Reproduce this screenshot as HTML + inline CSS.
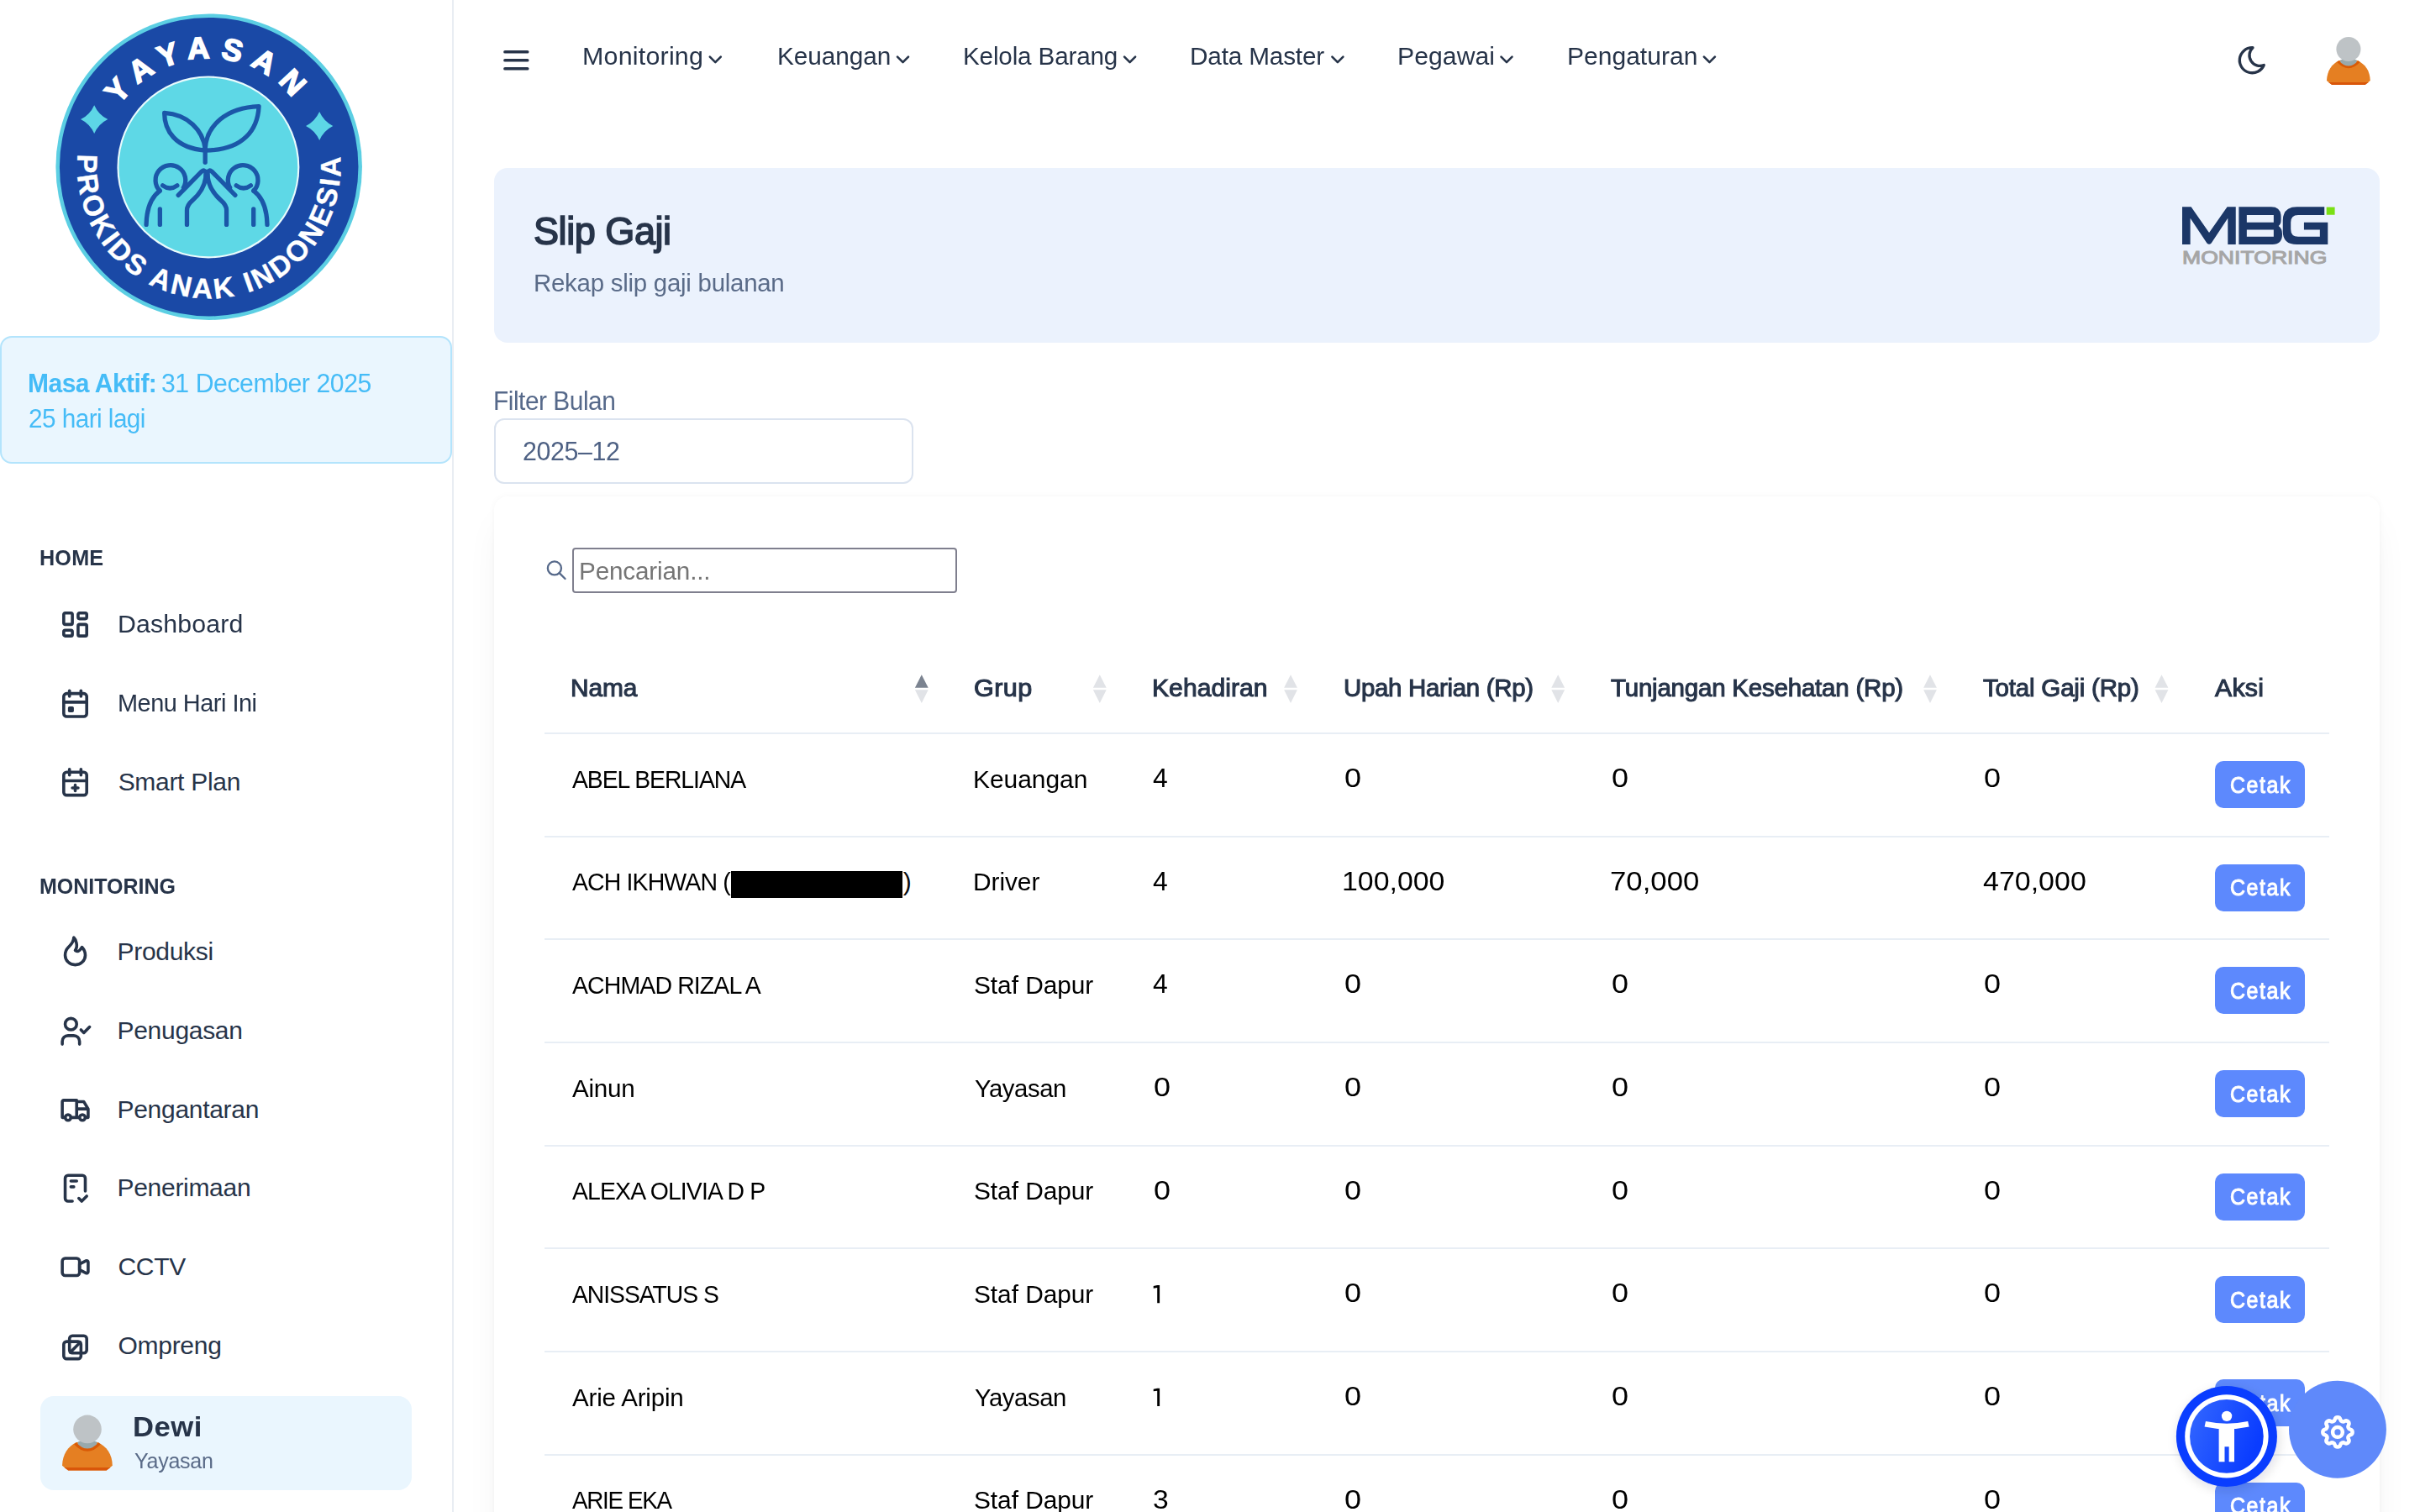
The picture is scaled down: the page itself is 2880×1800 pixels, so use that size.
<!DOCTYPE html>
<html><head><meta charset="utf-8"><title>Slip Gaji</title>
<style>
html,body{margin:0;padding:0;width:2880px;height:1800px;overflow:hidden;}
body{width:2880px;height:1800px;overflow:hidden;position:relative;background:#ffffff;font-family:"Liberation Sans",sans-serif;}
@media (max-width:2000px){html{zoom:0.5;}}
.t{position:absolute;white-space:nowrap;line-height:1;}
.abs{position:absolute;}
svg{position:absolute;overflow:visible;}
</style></head><body><div style="position:absolute;left:0;top:0;width:2880px;height:1800px;overflow:hidden;">
<div class="abs" style="left:538px;top:0;width:2px;height:1800px;background:#e9edf3;"></div>
<div class="abs" style="left:0;top:400px;width:534px;height:148px;border:2px solid #b3e4fc;border-radius:14px;background:#eaf6fe;"></div>
<div class="t" style="left:33.48px;top:441.11px;font-size:31px;font-weight:700;color:#45bcf7;letter-spacing:-0.52px;transform:scaleX(0.9675);transform-origin:0 0;">Masa Aktif:</div>
<div class="t" style="left:192.47px;top:441.11px;font-size:31px;color:#45bcf7;letter-spacing:-0.45px;transform:scaleX(0.9743);transform-origin:0 0;">31 December 2025</div>
<div class="t" style="left:34.01px;top:482.91px;font-size:31px;color:#45bcf7;letter-spacing:-0.56px;transform:scaleX(0.9585);transform-origin:0 0;">25 hari lagi</div>
<div class="t" style="left:47.30px;top:652.38px;font-size:25px;font-weight:700;color:#273449;letter-spacing:0.18px;transform:scaleX(1.0075);transform-origin:0 0;">HOME</div>
<div class="t" style="left:47.31px;top:1042.88px;font-size:25px;font-weight:700;color:#273449;letter-spacing:-0.01px;transform:scaleX(0.9996);transform-origin:0 0;">MONITORING</div>
<div class="t" style="left:139.50px;top:727.85px;font-size:30px;color:#273449;letter-spacing:0.16px;transform:scaleX(1.0093);transform-origin:0 0;">Dashboard</div>
<div class="t" style="left:139.61px;top:822.05px;font-size:30px;color:#273449;letter-spacing:-0.52px;transform:scaleX(0.9639);transform-origin:0 0;">Menu Hari Ini</div>
<div class="t" style="left:140.65px;top:915.65px;font-size:30px;color:#273449;letter-spacing:-0.30px;">Smart Plan</div>
<div class="t" style="left:139.53px;top:1117.65px;font-size:30px;color:#273449;letter-spacing:-0.30px;">Produksi</div>
<div class="t" style="left:139.53px;top:1212.15px;font-size:30px;color:#273449;letter-spacing:-0.30px;">Penugasan</div>
<div class="t" style="left:139.53px;top:1306.25px;font-size:30px;color:#273449;letter-spacing:-0.30px;">Pengantaran</div>
<div class="t" style="left:139.53px;top:1399.05px;font-size:30px;color:#273449;letter-spacing:-0.30px;">Penerimaan</div>
<div class="t" style="left:140.50px;top:1492.65px;font-size:30px;color:#273449;letter-spacing:-0.30px;">CCTV</div>
<div class="t" style="left:140.57px;top:1586.65px;font-size:30px;color:#273449;letter-spacing:-0.30px;">Ompreng</div>
<div class="abs" style="left:48px;top:1662px;width:442px;height:112px;border-radius:16px;background:#eaf6fe;"></div>
<div class="t" style="left:158.16px;top:1681.27px;font-size:34px;font-weight:700;color:#273449;letter-spacing:0.47px;transform:scaleX(1.0190);transform-origin:0 0;">Dewi</div>
<div class="t" style="left:159.94px;top:1727.45px;font-size:25.5px;color:#5a6b88;letter-spacing:-0.29px;transform:scaleX(0.9816);transform-origin:0 0;">Yayasan</div>
<div class="t" style="left:693.39px;top:52.25px;font-size:30px;color:#273449;letter-spacing:0.21px;transform:scaleX(1.0136);transform-origin:0 0;">Monitoring</div>
<div class="t" style="left:925.04px;top:52.25px;font-size:30px;color:#273449;letter-spacing:-0.10px;transform:scaleX(0.9945);transform-origin:0 0;">Keuangan</div>
<div class="t" style="left:1146.15px;top:52.25px;font-size:30px;color:#273449;letter-spacing:-0.17px;transform:scaleX(0.9887);transform-origin:0 0;">Kelola Barang</div>
<div class="t" style="left:1416.15px;top:52.25px;font-size:30px;color:#273449;letter-spacing:-0.16px;transform:scaleX(0.9902);transform-origin:0 0;">Data Master</div>
<div class="t" style="left:1662.91px;top:52.25px;font-size:30px;color:#273449;letter-spacing:0.08px;transform:scaleX(1.0044);transform-origin:0 0;">Pegawai</div>
<div class="t" style="left:1864.92px;top:52.25px;font-size:30px;color:#273449;letter-spacing:0.01px;transform:scaleX(1.0008);transform-origin:0 0;">Pengaturan</div>
<div class="abs" style="left:588px;top:200px;width:2244px;height:208px;border-radius:16px;background:#ebf2fd;"></div>
<div class="t" style="left:635.38px;top:251.93px;font-size:46px;-webkit-text-stroke:1.66px #273449;color:#273449;letter-spacing:-0.45px;transform:scaleX(0.9782);transform-origin:0 0;">Slip Gaji</div>
<div class="t" style="left:634.57px;top:321.65px;font-size:30px;color:#5a6b88;letter-spacing:-0.26px;transform:scaleX(0.9811);transform-origin:0 0;">Rekap slip gaji bulanan</div>
<div class="t" style="left:587.44px;top:461.81px;font-size:31px;color:#56698a;letter-spacing:-0.50px;transform:scaleX(0.9636);transform-origin:0 0;">Filter Bulan</div>
<div class="abs" style="left:588px;top:498px;width:495px;height:73.5px;border:2px solid #dbe3ef;border-radius:12px;background:#fff;"></div>
<div class="t" style="left:621.68px;top:522.00px;font-size:31px;color:#4e6184;letter-spacing:-0.40px;transform:scaleX(0.9795);transform-origin:0 0;">2025–12</div>
<div class="abs" style="left:588px;top:591px;width:2244px;height:1400px;border-radius:16px;background:#fff;box-shadow:0 24px 48px -12px rgba(15,23,42,0.07),0 0 8px rgba(15,23,42,0.035);"></div>
<div class="abs" style="left:681px;top:652px;width:454px;height:49.5px;border:2px solid #7f7f8e;border-radius:4px;background:#fff;"></div>
<div class="t" style="left:688.75px;top:664.65px;font-size:30px;color:#757575;letter-spacing:-0.16px;transform:scaleX(0.9888);transform-origin:0 0;">Pencarian...</div>
<div class="t" style="left:678.53px;top:804.45px;font-size:30px;-webkit-text-stroke:1.08px #273449;color:#273449;letter-spacing:-0.10px;transform:scaleX(0.9960);transform-origin:0 0;">Nama</div>
<div class="t" style="left:1159.07px;top:804.45px;font-size:30px;-webkit-text-stroke:1.08px #273449;color:#273449;letter-spacing:0.42px;transform:scaleX(1.0195);transform-origin:0 0;">Grup</div>
<div class="t" style="left:1371.32px;top:804.45px;font-size:30px;-webkit-text-stroke:1.08px #273449;color:#273449;letter-spacing:0.05px;transform:scaleX(1.0031);transform-origin:0 0;">Kehadiran</div>
<div class="t" style="left:1599.02px;top:804.45px;font-size:30px;-webkit-text-stroke:1.08px #273449;color:#273449;letter-spacing:-0.30px;transform:scaleX(0.9805);transform-origin:0 0;">Upah Harian (Rp)</div>
<div class="t" style="left:1917.34px;top:804.45px;font-size:30px;-webkit-text-stroke:1.08px #273449;color:#273449;letter-spacing:-0.24px;transform:scaleX(0.9846);transform-origin:0 0;">Tunjangan Kesehatan (Rp)</div>
<div class="t" style="left:2359.84px;top:804.45px;font-size:30px;-webkit-text-stroke:1.08px #273449;color:#273449;letter-spacing:-0.21px;transform:scaleX(0.9848);transform-origin:0 0;">Total Gaji (Rp)</div>
<div class="t" style="left:2635.92px;top:804.45px;font-size:30px;-webkit-text-stroke:1.08px #273449;color:#273449;letter-spacing:0.20px;transform:scaleX(1.0109);transform-origin:0 0;">Aksi</div>
<div class="abs" style="left:648px;top:872.00px;width:2124px;height:2px;background:#e8eef5;"></div>
<div class="abs" style="left:648px;top:994.66px;width:2124px;height:2px;background:#e8eef5;"></div>
<div class="abs" style="left:648px;top:1117.32px;width:2124px;height:2px;background:#e8eef5;"></div>
<div class="abs" style="left:648px;top:1239.98px;width:2124px;height:2px;background:#e8eef5;"></div>
<div class="abs" style="left:648px;top:1362.64px;width:2124px;height:2px;background:#e8eef5;"></div>
<div class="abs" style="left:648px;top:1485.30px;width:2124px;height:2px;background:#e8eef5;"></div>
<div class="abs" style="left:648px;top:1607.96px;width:2124px;height:2px;background:#e8eef5;"></div>
<div class="abs" style="left:648px;top:1730.62px;width:2124px;height:2px;background:#e8eef5;"></div>
<div class="t" style="left:680.93px;top:912.65px;font-size:30px;color:#000000;letter-spacing:-1.08px;transform:scaleX(0.9442);transform-origin:0 0;">ABEL BERLIANA</div>
<div class="t" style="left:1158.13px;top:912.65px;font-size:30px;color:#000000;letter-spacing:-0.03px;transform:scaleX(0.9983);transform-origin:0 0;">Keuangan</div>
<div class="t" style="left:1372.08px;top:911.13px;font-size:31.8px;color:#000000;transform:scaleX(1.0026);transform-origin:0 0;">4</div>
<div class="t" style="left:1600.06px;top:911.13px;font-size:31.8px;color:#000000;transform:scaleX(1.1327);transform-origin:0 0;">0</div>
<div class="t" style="left:1918.06px;top:911.13px;font-size:31.8px;color:#000000;transform:scaleX(1.1327);transform-origin:0 0;">0</div>
<div class="t" style="left:2360.56px;top:911.13px;font-size:31.8px;color:#000000;transform:scaleX(1.1327);transform-origin:0 0;">0</div>
<div class="abs" style="left:2636px;top:906.00px;width:107px;height:56px;border-radius:10px;background:#5d89fd;"></div>
<div class="t" style="left:2653.55px;top:920.79px;font-size:27.7px;-webkit-text-stroke:1.00px #ffffff;color:#ffffff;letter-spacing:1.75px;transform:scaleX(0.9000);transform-origin:0 0;">Cetak</div>
<div class="t" style="left:680.93px;top:1035.31px;font-size:30px;color:#000000;letter-spacing:-0.94px;transform:scaleX(0.9502);transform-origin:0 0;">ACH IKHWAN (</div>
<div class="t" style="left:1158.14px;top:1035.31px;font-size:30px;color:#000000;letter-spacing:-0.06px;transform:scaleX(0.9959);transform-origin:0 0;">Driver</div>
<div class="t" style="left:1372.08px;top:1033.79px;font-size:31.8px;color:#000000;transform:scaleX(1.0026);transform-origin:0 0;">4</div>
<div class="t" style="left:1597.46px;top:1033.79px;font-size:31.8px;color:#000000;transform:scaleX(1.0647);transform-origin:0 0;">100,000</div>
<div class="t" style="left:1916.26px;top:1033.79px;font-size:31.8px;color:#000000;transform:scaleX(1.0937);transform-origin:0 0;">70,000</div>
<div class="t" style="left:2359.74px;top:1033.79px;font-size:31.8px;color:#000000;transform:scaleX(1.0684);transform-origin:0 0;">470,000</div>
<div class="abs" style="left:2636px;top:1028.66px;width:107px;height:56px;border-radius:10px;background:#5d89fd;"></div>
<div class="t" style="left:2653.55px;top:1043.45px;font-size:27.7px;-webkit-text-stroke:1.00px #ffffff;color:#ffffff;letter-spacing:1.75px;transform:scaleX(0.9000);transform-origin:0 0;">Cetak</div>
<div class="t" style="left:680.93px;top:1157.97px;font-size:30px;color:#000000;letter-spacing:-0.95px;transform:scaleX(0.9502);transform-origin:0 0;">ACHMAD RIZAL A</div>
<div class="t" style="left:1159.26px;top:1157.97px;font-size:30px;color:#000000;letter-spacing:-0.06px;transform:scaleX(0.9961);transform-origin:0 0;">Staf Dapur</div>
<div class="t" style="left:1372.08px;top:1156.45px;font-size:31.8px;color:#000000;transform:scaleX(1.0026);transform-origin:0 0;">4</div>
<div class="t" style="left:1600.06px;top:1156.45px;font-size:31.8px;color:#000000;transform:scaleX(1.1327);transform-origin:0 0;">0</div>
<div class="t" style="left:1918.06px;top:1156.45px;font-size:31.8px;color:#000000;transform:scaleX(1.1327);transform-origin:0 0;">0</div>
<div class="t" style="left:2360.56px;top:1156.45px;font-size:31.8px;color:#000000;transform:scaleX(1.1327);transform-origin:0 0;">0</div>
<div class="abs" style="left:2636px;top:1151.32px;width:107px;height:56px;border-radius:10px;background:#5d89fd;"></div>
<div class="t" style="left:2653.55px;top:1166.11px;font-size:27.7px;-webkit-text-stroke:1.00px #ffffff;color:#ffffff;letter-spacing:1.75px;transform:scaleX(0.9000);transform-origin:0 0;">Cetak</div>
<div class="t" style="left:680.93px;top:1280.63px;font-size:30px;color:#000000;letter-spacing:-0.24px;transform:scaleX(0.9874);transform-origin:0 0;">Ainun</div>
<div class="t" style="left:1159.94px;top:1280.63px;font-size:30px;color:#000000;letter-spacing:-0.43px;transform:scaleX(0.9771);transform-origin:0 0;">Yayasan</div>
<div class="t" style="left:1372.86px;top:1279.11px;font-size:31.8px;color:#000000;transform:scaleX(1.1327);transform-origin:0 0;">0</div>
<div class="t" style="left:1600.06px;top:1279.11px;font-size:31.8px;color:#000000;transform:scaleX(1.1327);transform-origin:0 0;">0</div>
<div class="t" style="left:1918.06px;top:1279.11px;font-size:31.8px;color:#000000;transform:scaleX(1.1327);transform-origin:0 0;">0</div>
<div class="t" style="left:2360.56px;top:1279.11px;font-size:31.8px;color:#000000;transform:scaleX(1.1327);transform-origin:0 0;">0</div>
<div class="abs" style="left:2636px;top:1273.98px;width:107px;height:56px;border-radius:10px;background:#5d89fd;"></div>
<div class="t" style="left:2653.55px;top:1288.77px;font-size:27.7px;-webkit-text-stroke:1.00px #ffffff;color:#ffffff;letter-spacing:1.75px;transform:scaleX(0.9000);transform-origin:0 0;">Cetak</div>
<div class="t" style="left:680.93px;top:1403.29px;font-size:30px;color:#000000;letter-spacing:-0.91px;transform:scaleX(0.9463);transform-origin:0 0;">ALEXA OLIVIA D P</div>
<div class="t" style="left:1159.26px;top:1403.29px;font-size:30px;color:#000000;letter-spacing:-0.06px;transform:scaleX(0.9961);transform-origin:0 0;">Staf Dapur</div>
<div class="t" style="left:1372.86px;top:1401.77px;font-size:31.8px;color:#000000;transform:scaleX(1.1327);transform-origin:0 0;">0</div>
<div class="t" style="left:1600.06px;top:1401.77px;font-size:31.8px;color:#000000;transform:scaleX(1.1327);transform-origin:0 0;">0</div>
<div class="t" style="left:1918.06px;top:1401.77px;font-size:31.8px;color:#000000;transform:scaleX(1.1327);transform-origin:0 0;">0</div>
<div class="t" style="left:2360.56px;top:1401.77px;font-size:31.8px;color:#000000;transform:scaleX(1.1327);transform-origin:0 0;">0</div>
<div class="abs" style="left:2636px;top:1396.64px;width:107px;height:56px;border-radius:10px;background:#5d89fd;"></div>
<div class="t" style="left:2653.55px;top:1411.43px;font-size:27.7px;-webkit-text-stroke:1.00px #ffffff;color:#ffffff;letter-spacing:1.75px;transform:scaleX(0.9000);transform-origin:0 0;">Cetak</div>
<div class="t" style="left:680.93px;top:1525.95px;font-size:30px;color:#000000;letter-spacing:-1.09px;transform:scaleX(0.9438);transform-origin:0 0;">ANISSATUS S</div>
<div class="t" style="left:1159.26px;top:1525.95px;font-size:30px;color:#000000;letter-spacing:-0.06px;transform:scaleX(0.9961);transform-origin:0 0;">Staf Dapur</div>
<svg style="left:0;top:0;width:1px;height:1px;"><path d="M1377.2 1530.10H1380.1V1551.30H1377.2V1533.10L1372.7 1533.70V1531.10Z" fill="#000"/></svg>
<div class="t" style="left:1600.06px;top:1524.43px;font-size:31.8px;color:#000000;transform:scaleX(1.1327);transform-origin:0 0;">0</div>
<div class="t" style="left:1918.06px;top:1524.43px;font-size:31.8px;color:#000000;transform:scaleX(1.1327);transform-origin:0 0;">0</div>
<div class="t" style="left:2360.56px;top:1524.43px;font-size:31.8px;color:#000000;transform:scaleX(1.1327);transform-origin:0 0;">0</div>
<div class="abs" style="left:2636px;top:1519.30px;width:107px;height:56px;border-radius:10px;background:#5d89fd;"></div>
<div class="t" style="left:2653.55px;top:1534.09px;font-size:27.7px;-webkit-text-stroke:1.00px #ffffff;color:#ffffff;letter-spacing:1.75px;transform:scaleX(0.9000);transform-origin:0 0;">Cetak</div>
<div class="t" style="left:680.93px;top:1648.61px;font-size:30px;color:#000000;letter-spacing:-0.20px;transform:scaleX(0.9855);transform-origin:0 0;">Arie Aripin</div>
<div class="t" style="left:1159.94px;top:1648.61px;font-size:30px;color:#000000;letter-spacing:-0.43px;transform:scaleX(0.9771);transform-origin:0 0;">Yayasan</div>
<svg style="left:0;top:0;width:1px;height:1px;"><path d="M1377.2 1652.76H1380.1V1673.96H1377.2V1655.76L1372.7 1656.36V1653.76Z" fill="#000"/></svg>
<div class="t" style="left:1600.06px;top:1647.09px;font-size:31.8px;color:#000000;transform:scaleX(1.1327);transform-origin:0 0;">0</div>
<div class="t" style="left:1918.06px;top:1647.09px;font-size:31.8px;color:#000000;transform:scaleX(1.1327);transform-origin:0 0;">0</div>
<div class="t" style="left:2360.56px;top:1647.09px;font-size:31.8px;color:#000000;transform:scaleX(1.1327);transform-origin:0 0;">0</div>
<div class="abs" style="left:2636px;top:1641.96px;width:107px;height:56px;border-radius:10px;background:#5d89fd;"></div>
<div class="t" style="left:2653.55px;top:1656.75px;font-size:27.7px;-webkit-text-stroke:1.00px #ffffff;color:#ffffff;letter-spacing:1.75px;transform:scaleX(0.9000);transform-origin:0 0;">Cetak</div>
<div class="t" style="left:680.93px;top:1771.27px;font-size:30px;color:#000000;letter-spacing:-1.42px;transform:scaleX(0.9279);transform-origin:0 0;">ARIE EKA</div>
<div class="t" style="left:1159.26px;top:1771.27px;font-size:30px;color:#000000;letter-spacing:-0.06px;transform:scaleX(0.9961);transform-origin:0 0;">Staf Dapur</div>
<div class="t" style="left:1371.54px;top:1769.75px;font-size:31.8px;color:#000000;transform:scaleX(1.0593);transform-origin:0 0;">3</div>
<div class="t" style="left:1600.06px;top:1769.75px;font-size:31.8px;color:#000000;transform:scaleX(1.1327);transform-origin:0 0;">0</div>
<div class="t" style="left:1918.06px;top:1769.75px;font-size:31.8px;color:#000000;transform:scaleX(1.1327);transform-origin:0 0;">0</div>
<div class="t" style="left:2360.56px;top:1769.75px;font-size:31.8px;color:#000000;transform:scaleX(1.1327);transform-origin:0 0;">0</div>
<div class="abs" style="left:2636px;top:1764.62px;width:107px;height:56px;border-radius:10px;background:#5d89fd;"></div>
<div class="t" style="left:2653.55px;top:1779.41px;font-size:27.7px;-webkit-text-stroke:1.00px #ffffff;color:#ffffff;letter-spacing:1.75px;transform:scaleX(0.9000);transform-origin:0 0;">Cetak</div>
<div class="abs" style="left:870px;top:1037px;width:204px;height:31.5px;background:#000;"></div>
<div class="t" style="left:1074.78px;top:1035.31px;font-size:30px;color:#0b0b0b;">)</div>
<svg style="left:0;top:0;width:1px;height:1px;"><g transform="translate(594.30,51.70) scale(1.67)" fill="none" stroke-linecap="round" stroke-linejoin="round" stroke="#273449" stroke-width="2.2"><path d="M4 6h16"/><path d="M4 12h16"/><path d="M4 18h16"/></g></svg>
<svg style="left:0;top:0;width:1px;height:1px;"><g transform="translate(2660.30,51.70) scale(1.67)" fill="none" stroke-linecap="round" stroke-linejoin="round" stroke="#273449" stroke-width="2.0"><path d="M12 3c.132 0 .263 0 .393 0a7.5 7.5 0 0 0 7.92 12.446a9 9 0 1 1 -8.313 -12.454z"/></g></svg>
<svg style="left:0;top:0;width:1px;height:1px;"><polyline points="844.8,67.6 851.3,74.1 857.8,67.6" fill="none" stroke-linecap="round" stroke-linejoin="round" stroke="#273449" stroke-width="2.6"/></svg>
<svg style="left:0;top:0;width:1px;height:1px;"><polyline points="1068.0,67.6 1074.5,74.1 1081.0,67.6" fill="none" stroke-linecap="round" stroke-linejoin="round" stroke="#273449" stroke-width="2.6"/></svg>
<svg style="left:0;top:0;width:1px;height:1px;"><polyline points="1338.1,67.6 1344.6,74.1 1351.1,67.6" fill="none" stroke-linecap="round" stroke-linejoin="round" stroke="#273449" stroke-width="2.6"/></svg>
<svg style="left:0;top:0;width:1px;height:1px;"><polyline points="1585.4,67.6 1591.9,74.1 1598.4,67.6" fill="none" stroke-linecap="round" stroke-linejoin="round" stroke="#273449" stroke-width="2.6"/></svg>
<svg style="left:0;top:0;width:1px;height:1px;"><polyline points="1786.5,67.6 1793.0,74.1 1799.5,67.6" fill="none" stroke-linecap="round" stroke-linejoin="round" stroke="#273449" stroke-width="2.6"/></svg>
<svg style="left:0;top:0;width:1px;height:1px;"><polyline points="2027.9,67.6 2034.4,74.1 2040.9,67.6" fill="none" stroke-linecap="round" stroke-linejoin="round" stroke="#273449" stroke-width="2.6"/></svg>
<svg style="left:0;top:0;width:1px;height:1px;"><g transform="translate(69.00,722.90) scale(1.71)" fill="none" stroke-linecap="round" stroke-linejoin="round" stroke="#273449" stroke-width="2.1"><path d="M5 4h4a1 1 0 0 1 1 1v6a1 1 0 0 1 -1 1h-4a1 1 0 0 1 -1 -1v-6a1 1 0 0 1 1 -1"/><path d="M5 16h4a1 1 0 0 1 1 1v2a1 1 0 0 1 -1 1h-4a1 1 0 0 1 -1 -1v-2a1 1 0 0 1 1 -1"/><path d="M15 12h4a1 1 0 0 1 1 1v6a1 1 0 0 1 -1 1h-4a1 1 0 0 1 -1 -1v-6a1 1 0 0 1 1 -1"/><path d="M15 4h4a1 1 0 0 1 1 1v2a1 1 0 0 1 -1 1h-4a1 1 0 0 1 -1 -1v-2a1 1 0 0 1 1 -1"/></g></svg>
<svg style="left:0;top:0;width:1px;height:1px;"><g transform="translate(69.00,817.10) scale(1.71)" fill="none" stroke-linecap="round" stroke-linejoin="round" stroke="#273449" stroke-width="2.1"><path d="M4 7a2 2 0 0 1 2 -2h12a2 2 0 0 1 2 2v12a2 2 0 0 1 -2 2h-12a2 2 0 0 1 -2 -2z"/><path d="M16 3v4"/><path d="M8 3v4"/><path d="M4 11h16"/><path d="M8 15h2v2h-2z"/></g></svg>
<svg style="left:0;top:0;width:1px;height:1px;"><g transform="translate(69.00,910.70) scale(1.71)" fill="none" stroke-linecap="round" stroke-linejoin="round" stroke="#273449" stroke-width="2.1"><path d="M4 7a2 2 0 0 1 2 -2h12a2 2 0 0 1 2 2v12a2 2 0 0 1 -2 2h-12a2 2 0 0 1 -2 -2z"/><path d="M16 3v4"/><path d="M8 3v4"/><path d="M4 11h16"/><path d="M10 16h4"/><path d="M12 14v4"/></g></svg>
<svg style="left:0;top:0;width:1px;height:1px;"><g transform="translate(69.00,1112.70) scale(1.71)" fill="none" stroke-linecap="round" stroke-linejoin="round" stroke="#273449" stroke-width="2.1"><path d="M12 10.941c2.333 -3.308 .167 -7.823 -1 -8.941c0 3.395 -2.235 5.299 -3.667 6.706c-1.43 1.408 -2.333 3.621 -2.333 5.588c0 3.704 3.134 6.706 7 6.706s7 -3.002 7 -6.706c0 -1.712 -1.232 -4.403 -2.333 -5.588c-2.084 3.353 -3.257 3.353 -4.667 2.235"/></g></svg>
<svg style="left:0;top:0;width:1px;height:1px;"><g transform="translate(69.00,1207.20) scale(1.71)" fill="none" stroke-linecap="round" stroke-linejoin="round" stroke="#273449" stroke-width="2.1"><circle cx="9" cy="7" r="4"/><path d="M3 21v-2a4 4 0 0 1 4 -4h4a4 4 0 0 1 4 4v2"/><path d="M16 11l2 2l4 -4"/></g></svg>
<svg style="left:0;top:0;width:1px;height:1px;"><g transform="translate(69.00,1301.30) scale(1.71)" fill="none" stroke-linecap="round" stroke-linejoin="round" stroke="#273449" stroke-width="2.1"><path d="M7 17m-2 0a2 2 0 1 0 4 0a2 2 0 1 0 -4 0"/><path d="M17 17m-2 0a2 2 0 1 0 4 0a2 2 0 1 0 -4 0"/><path d="M5 17h-2v-11a1 1 0 0 1 1 -1h9v12m-4 0h6m4 0h2v-6h-8m0 -5h5l3 5"/></g></svg>
<svg style="left:0;top:0;width:1px;height:1px;"><g transform="translate(69.00,1394.10) scale(1.71)" fill="none" stroke-linecap="round" stroke-linejoin="round" stroke="#273449" stroke-width="2.1"><path d="M10 21h-3a2 2 0 0 1 -2 -2v-14a2 2 0 0 1 2 -2h10a2 2 0 0 1 2 2v9"/><path d="M9 7h4"/><path d="M9 11h2"/><path d="M14.5 19l2 2l3.5 -3.5"/></g></svg>
<svg style="left:0;top:0;width:1px;height:1px;"><g transform="translate(69.00,1487.70) scale(1.71)" fill="none" stroke-linecap="round" stroke-linejoin="round" stroke="#273449" stroke-width="2.1"><path d="M15 10l4.553 -2.276a1 1 0 0 1 1.447 .894v6.764a1 1 0 0 1 -1.447 .894l-4.553 -2.276v-4z"/><path d="M3 8a2 2 0 0 1 2 -2h8a2 2 0 0 1 2 2v8a2 2 0 0 1 -2 2h-8a2 2 0 0 1 -2 -2z"/></g></svg>
<svg style="left:0;top:0;width:1px;height:1px;"><g transform="translate(69.00,1581.70) scale(1.71)" fill="none" stroke-linecap="round" stroke-linejoin="round" stroke="#273449" stroke-width="2.1"><path d="M8 7a2 2 0 0 1 2 -2h8a2 2 0 0 1 2 2v8a2 2 0 0 1 -2 2h-8a2 2 0 0 1 -2 -2z"/><path d="M4 11a2 2 0 0 1 2 -2h8a2 2 0 0 1 2 2v8a2 2 0 0 1 -2 2h-8a2 2 0 0 1 -2 -2z"/><path d="M8.5 16.5l7 -7"/></g></svg>
<svg style="left:0;top:0;width:1px;height:1px;"><g transform="translate(648.40,664.90) scale(1.15)" fill="none" stroke-linecap="round" stroke-linejoin="round" stroke="#56698a" stroke-width="2.0"><path d="M3 10a7 7 0 1 0 14 0a7 7 0 1 0 -14 0"/><path d="M21 21l-6 -6"/></g></svg>
<svg style="left:0;top:0;width:1px;height:1px;"><path d="M1096.8 803.3L1104.7 818.8H1088.9Z" fill="#7b8390"/><path d="M1088.9 821.3H1104.7L1096.8 837Z" fill="#e1e3e7"/></svg>
<svg style="left:0;top:0;width:1px;height:1px;"><path d="M1308.8 803.3L1316.7 818.8H1300.9Z" fill="#e1e3e7"/><path d="M1300.9 821.3H1316.7L1308.8 837Z" fill="#e1e3e7"/></svg>
<svg style="left:0;top:0;width:1px;height:1px;"><path d="M1536.0 803.3L1543.9 818.8H1528.1Z" fill="#e1e3e7"/><path d="M1528.1 821.3H1543.9L1536.0 837Z" fill="#e1e3e7"/></svg>
<svg style="left:0;top:0;width:1px;height:1px;"><path d="M1854.2 803.3L1862.1 818.8H1846.3Z" fill="#e1e3e7"/><path d="M1846.3 821.3H1862.1L1854.2 837Z" fill="#e1e3e7"/></svg>
<svg style="left:0;top:0;width:1px;height:1px;"><path d="M2297.0 803.3L2304.9 818.8H2289.1Z" fill="#e1e3e7"/><path d="M2289.1 821.3H2304.9L2297.0 837Z" fill="#e1e3e7"/></svg>
<svg style="left:0;top:0;width:1px;height:1px;"><path d="M2572.5 803.3L2580.4 818.8H2564.6Z" fill="#e1e3e7"/><path d="M2564.6 821.3H2580.4L2572.5 837Z" fill="#e1e3e7"/></svg>
<svg style="left:0;top:0;width:1px;height:1px;"><g transform="translate(64.00,1676.00) scale(1.0)"><path d="M17.2 74.6 L10 68.8 C10.5 55 17 46 27 41 L52 41 C63 46 69.5 55 69.8 68.8 L62.7 74.6 Z" fill="#e57f22"/>
<path d="M12.5 71 L67.5 71 L62.7 74.6 L17.2 74.6 Z" fill="#d9560a"/>
<path d="M28.6 40.5 Q40 36 51.3 40.5 L51 46 Q40 52 29 46 Z" fill="#98a9ac"/>
<path d="M25.4 42.3 Q40 58 54.5 42.3" fill="none" stroke="#d95a06" stroke-width="3.2"/>
<circle cx="40" cy="25.4" r="16.8" fill="#bec3c6"/></g></svg>
<svg style="left:0;top:0;width:1px;height:1px;"><g transform="translate(2760.30,36.50) scale(0.866)"><path d="M17.2 74.6 L10 68.8 C10.5 55 17 46 27 41 L52 41 C63 46 69.5 55 69.8 68.8 L62.7 74.6 Z" fill="#e57f22"/>
<path d="M12.5 71 L67.5 71 L62.7 74.6 L17.2 74.6 Z" fill="#d9560a"/>
<path d="M28.6 40.5 Q40 36 51.3 40.5 L51 46 Q40 52 29 46 Z" fill="#98a9ac"/>
<path d="M25.4 42.3 Q40 58 54.5 42.3" fill="none" stroke="#d95a06" stroke-width="3.2"/>
<circle cx="40" cy="25.4" r="16.8" fill="#bec3c6"/></g></svg>
<svg style="left:2540px;top:200px;width:340px;height:220px;" viewBox="0 0 2337 1512">
<path d="M392 318H465L612 530L760 318H830V625H765V410L630 615Q612 632 594 615L458 410V625H392Z" fill="#1b3767"/>
<path d="M855 318H1120Q1200 318 1200 400V430Q1200 460 1180 475Q1210 495 1210 540V545Q1210 625 1130 625H855ZM920 385V445H1140V385ZM920 505V562H1140V505Z" fill="#1b3767" fill-rule="evenodd"/>
<path d="M1330 318H1555V385H1340Q1280 385 1280 445V500Q1280 562 1340 562H1518V505H1388V445H1583V625H1330Q1215 625 1215 520V430Q1215 318 1330 318Z" fill="#1b3767"/>
<rect x="1572" y="320" width="68" height="63" fill="#7ae014"/>
<text x="392" y="785" font-family="Liberation Sans" font-size="150" fill="#a6a6a6" stroke="#a6a6a6" stroke-width="7" textLength="1185" lengthAdjust="spacingAndGlyphs">MONITORING</text>
</svg>
<svg style="left:2540px;top:1540px;width:340px;height:260px;" viewBox="0 0 1977 1512">
<defs><linearGradient id="ag" x1="0" y1="0" x2="1" y2="0.4"><stop offset="0" stop-color="#3468ff"/><stop offset="1" stop-color="#0a3cff"/></linearGradient>
<filter id="sh" x="-30%" y="-30%" width="160%" height="160%"><feGaussianBlur stdDeviation="30"/></filter></defs>
<circle cx="1407" cy="941" r="337" fill="#5f89fa"/>
<g transform="translate(1270.2,822.2) scale(11.4)" fill="none" stroke="#ffffff" stroke-width="2.3" stroke-linecap="round" stroke-linejoin="round"><path d="M10.325 4.317c.426 -1.756 2.924 -1.756 3.35 0a1.724 1.724 0 0 0 2.573 1.066c1.543 -.94 3.31 .826 2.37 2.37a1.724 1.724 0 0 0 1.065 2.572c1.756 .426 1.756 2.924 0 3.35a1.724 1.724 0 0 0 -1.066 2.573c.94 1.543 -.826 3.31 -2.37 2.37a1.724 1.724 0 0 0 -2.572 1.065c-.426 1.756 -2.924 1.756 -3.35 0a1.724 1.724 0 0 0 -2.573 -1.066c-1.543 .94 -3.31 -.826 -2.37 -2.37a1.724 1.724 0 0 0 -1.065 -2.572c-1.756 -.426 -1.756 -2.924 0 -3.35a1.724 1.724 0 0 0 1.066 -2.573c-.94 -1.543 .826 -3.31 2.37 -2.37c1 .608 2.296 .07 2.572 -1.065z"/><path d="M9 12a3 3 0 1 0 6 0a3 3 0 0 0 -6 0"/></g>
<circle cx="650" cy="1010" r="360" fill="rgba(20,30,60,0.10)" filter="url(#sh)"/>
<circle cx="639" cy="988" r="349" fill="#0a3dff"/>
<circle cx="639" cy="988" r="289" fill="#ffffff"/>
<circle cx="639" cy="988" r="255" fill="url(#ag)"/>
<circle cx="640" cy="848" r="36" fill="#fff"/>
<path d="M490 903 Q640 935 790 903" fill="none" stroke="#fff" stroke-width="38"/>
<path d="M585 925H692V1165H655V1060H625V1165H585Z" fill="#fff"/>
</svg>
<svg style="left:50px;top:0px;width:400px;height:400px;" viewBox="0 0 1512 1512">
<defs><path id="lgTop" d="M328.4 995.0A488 488 0 1 1 1173.6 995.0"/><path id="lgBot" d="M238.3 455.0A592 592 0 1 0 1263.7 455.0"/></defs>
<circle cx="751" cy="751" r="689" fill="#5ccfe3"/>
<circle cx="751" cy="751" r="672" fill="#1a49a6"/>
<circle cx="748" cy="752" r="410" fill="#e9fbfd"/>
<circle cx="748" cy="752" r="402" fill="#5ed8e6"/>
<path d="M235 473.0Q254.52 516.52 296.0 537Q254.52 557.48 235 601.0Q215.48 557.48 174.0 537Q215.48 516.52 235 473.0Z" fill="#5dd6e6"/>
<path d="M1248 503.0Q1267.52 546.52 1309.0 567Q1267.52 587.48 1248 631.0Q1228.48 587.48 1187.0 567Q1228.48 546.52 1248 503.0Z" fill="#5dd6e6"/>
<text font-family="Liberation Sans" font-weight="700" font-size="138" fill="#ffffff" stroke="#ffffff" stroke-width="6" letter-spacing="44.3"><textPath href="#lgTop" startOffset="50%" text-anchor="middle">YAYASAN</textPath></text>
<text font-family="Liberation Sans" font-weight="700" font-size="128" fill="#ffffff" stroke="#ffffff" stroke-width="1.5" letter-spacing="11.1"><textPath href="#lgBot" startOffset="50%" text-anchor="middle">PROKIDS ANAK INDONESIA</textPath></text>
</svg>
<svg style="left:150px;top:110px;width:200px;height:200px;" viewBox="0 0 1512 1512">
<g fill="none" stroke="#1b57a8" stroke-width="40" stroke-linecap="round" stroke-linejoin="round">
<path d="M712 505C690 340 560 200 345 185C345 340 440 500 712 522"/>
<path d="M712 505C725 300 900 135 1195 125C1185 330 1060 522 712 522"/>
<path d="M712 470V630"/>
<path d="M304.5 885.5A135 135 0 1 1 517 857.5"/>
<path d="M304.5 885.5C230 940 185 1030 182 1190"/>
<path d="M305 1050V1190"/>
<path d="M470 925L680 712Q705 690 718 720L716 770Q700 880 600 970Q548 1015 548 1060V1190"/>
<path d="M330 838Q395 885 460 838"/>
<g transform="translate(1452,0) scale(-1,1)"><path d="M304.5 885.5A135 135 0 1 1 517 857.5"/>
<path d="M304.5 885.5C230 940 185 1030 182 1190"/>
<path d="M305 1050V1190"/>
<path d="M470 925L680 712Q705 690 718 720L716 770Q700 880 600 970Q548 1015 548 1060V1190"/>
<path d="M330 838Q395 885 460 838"/></g>
</g></svg>
</div></body></html>
